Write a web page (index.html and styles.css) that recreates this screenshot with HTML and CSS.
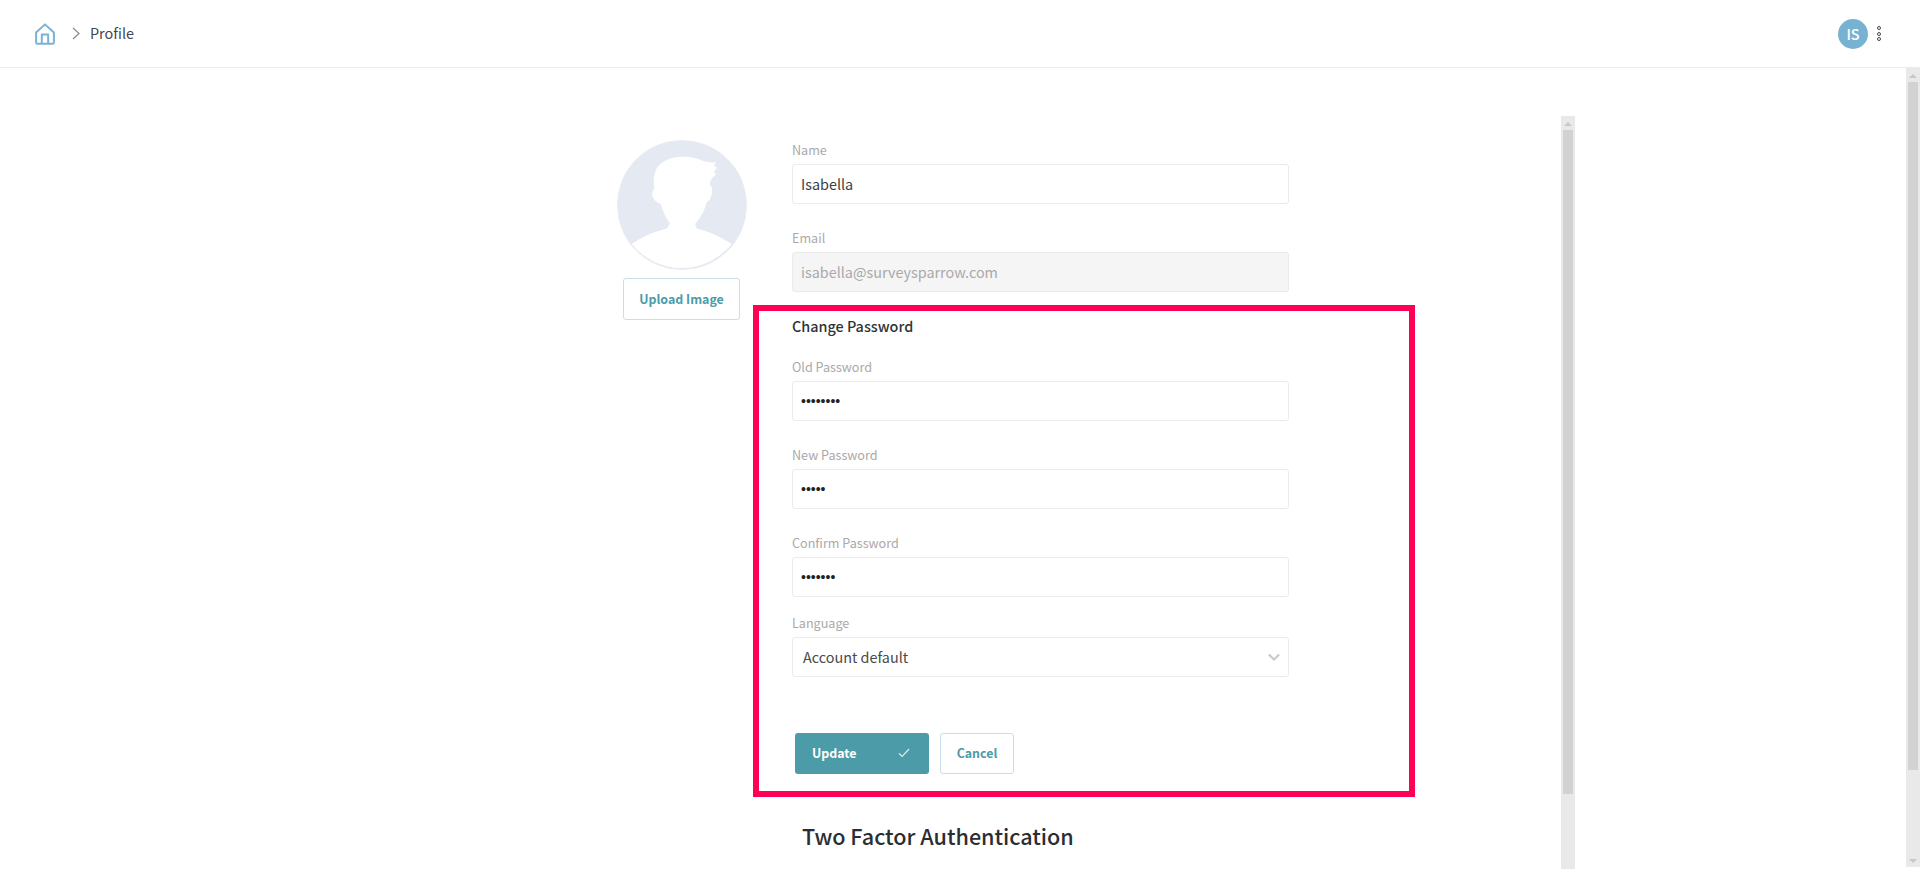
FILE: index.html
```html
<!DOCTYPE html>
<html lang="en">
<head>
    <meta charset="UTF-8">
    <title>Profile</title>
    <link rel="stylesheet" href="styles.css">
</head>
<body>
    <header class="topbar">
        <div class="crumbs">
            <svg class="home-icon" width="20" height="22" viewBox="0 0 22 24" fill="none" stroke="#7ab3d3" stroke-width="2.2" stroke-linejoin="round">
                <path d="M1.2 10.4 11 1.4l9.8 9v11a1.4 1.4 0 0 1-1.4 1.4H2.6a1.4 1.4 0 0 1-1.4-1.4z"/>
                <path d="M7.5 22.8V12.5h7v10.3"/>
            </svg>
            <svg class="crumb-arrow" width="8" height="13" viewBox="0 0 8 13" fill="none" stroke="#8a8a8a" stroke-width="1.2">
                <path d="M1 1l6 5.5L1 12"/>
            </svg>
            <span class="crumb-text">Profile</span>
        </div>
        <div class="user">
            <span class="avatar-small">IS</span>
            <span class="dots"><i></i><i></i><i></i></span>
        </div>
    </header>

    <div class="page">
        <main class="main">
            <div class="panel">
                <div class="profile">
                    <div class="photo-col">
                        <div class="photo">
                            <svg width="130" height="130" viewBox="0 0 130 130">
                                <circle cx="65" cy="65" r="64.5" fill="#e5e9f1" stroke="#e9ecf1"/>
                                <path fill="#fff" d="M14.7 104Q28 94 50 88.5L53 83.3Q46 74 44 64 37 62 35 55 35 51 37.5 48.3 35 38 39.7 28.3 44 20 59.7 17 73 15 86.3 21 92 23 99 22.3L97 25.7 100.3 27.7 97 31.7 99 34.3 95 38.3Q92.5 42 93 45 96 47 95 53 94 60 89.7 62 87 74 78 84L80 88.5Q100 94 114.7 104A64 64 0 0 1 14.7 104z"/>
                            </svg>
                        </div>
                        <button class="btn btn-outline upload-btn">Upload Image</button>
                    </div>

                    <div class="form-col">
                        <div class="field">
                            <label class="field-label">Name</label>
                            <div class="input">Isabella</div>
                        </div>
                        <div class="field">
                            <label class="field-label">Email</label>
                            <div class="input input-disabled">isabella@surveysparrow.com</div>
                        </div>

                        <section class="highlight">
                            <h4 class="section-title">Change Password</h4>
                            <div class="field">
                                <label class="field-label">Old Password</label>
                                <div class="input input-secret">••••••••</div>
                            </div>
                            <div class="field">
                                <label class="field-label">New Password</label>
                                <div class="input input-secret">•••••</div>
                            </div>
                            <div class="field field-confirm">
                                <label class="field-label">Confirm Password</label>
                                <div class="input input-secret">•••••••</div>
                            </div>
                            <div class="field field-last">
                                <label class="field-label">Language</label>
                                <div class="input input-select">
                                    <span>Account default</span>
                                    <svg width="12" height="8" viewBox="0 0 14 9" fill="none" stroke="#c9c9c9" stroke-width="2.4">
                                        <path d="M1 1.5l6 6 6-6"/>
                                    </svg>
                                </div>
                            </div>
                            <div class="actions">
                                <button class="btn btn-primary">
                                    <span>Update</span>
                                    <svg width="12" height="10" viewBox="0 0 12 10" fill="none" stroke="#d9ecee" stroke-width="1.2">
                                        <path d="M1 5.5l3.2 3L11 1"/>
                                    </svg>
                                </button>
                                <button class="btn btn-outline cancel-btn">Cancel</button>
                            </div>
                        </section>

                        <h2 class="two-factor">Two Factor Authentication</h2>
                    </div>
                </div>
            </div>
            <div class="scrollbar inner-scroll">
                <span class="scroll-arrow"></span>
                <span class="scroll-thumb"></span>
            </div>
        </main>
        <div class="scrollbar page-scroll">
            <span class="scroll-arrow"></span>
            <span class="scroll-thumb"></span>
            <span class="scroll-arrow scroll-arrow-down"></span>
        </div>
    </div>
</body>
</html>
```

FILE: styles.css
```css
* {
    box-sizing: border-box;
}

html, body {
    height: 100%;
    margin: 0;
    overflow: hidden;
}

body {
    font-family: "Noto Sans CJK SC", "Noto Sans", sans-serif;
    color: #3a3f44;
    background: #fff;
    display: flex;
    flex-direction: column;
}

.topbar {
    height: 68px;
    flex: none;
    display: flex;
    align-items: center;
    justify-content: space-between;
    padding: 0 39px 0 35px;
    border-bottom: 1px solid #ebebeb;
}

.crumbs {
    display: flex;
    align-items: center;
}

.crumb-arrow {
    margin-left: 17px;
    margin-right: 10px;
}

.crumb-text {
    font-size: 14.4px;
    line-height: 20px;
    color: #3f464c;
    margin-top: -1px;
}

.user {
    display: flex;
    align-items: center;
    gap: 9px;
}

.avatar-small {
    width: 30px;
    height: 30px;
    border-radius: 50%;
    background: #78b2d3;
    color: #fff;
    font-size: 14.4px;
    font-weight: 500;
    display: flex;
    align-items: center;
    justify-content: center;
}

.dots {
    display: flex;
    flex-direction: column;
    gap: 1.5px;
}

.dots i {
    width: 4px;
    height: 4px;
    border: 1px solid #4a4a4a;
    border-radius: 50%;
}

.page {
    flex: 1;
    min-height: 0;
    display: flex;
}

.main {
    flex: 1;
    min-width: 0;
    display: flex;
    padding-top: 48px;
    padding-left: 617px;
    padding-right: 331px;
    overflow: hidden;
}

.panel {
    flex: 1;
    min-width: 0;
}

.profile {
    display: flex;
    padding-top: 24px;
}

.photo-col {
    width: 130px;
    flex: none;
    display: flex;
    flex-direction: column;
    align-items: flex-start;
}

.photo {
    height: 130px;
}

.upload-btn {
    width: 117px;
    height: 42px;
    margin: 8px 0 0 6px;
    font-size: 12.4px;
}

.form-col {
    width: 497px;
    margin-left: 45px;
    flex: none;
}

.field {
    margin-bottom: 24px;
}

.field-confirm {
    margin-bottom: 16px;
}

.field-label {
    display: block;
    font-size: 12.6px;
    line-height: 20px;
    color: #a9a9a9;
    margin-bottom: 4px;
}

.input {
    height: 40px;
    border: 1px solid #ebebeb;
    border-radius: 3px;
    padding: 0 8px 1px;
    display: flex;
    align-items: center;
    font-size: 14.4px;
    color: #3a3f44;
    background: #fff;
}

.input-disabled {
    background: #f5f5f5;
    color: #a9a9a9;
}

.input-secret {
    font-family: "Liberation Sans", sans-serif;
    font-size: 14px;
    color: #222;
}

.input-select {
    padding: 0 8px 1px 10px;
    justify-content: space-between;
    color: #4a4a4a;
}

.highlight {
    width: 662px;
    height: 492px;
    margin-left: -39px;
    margin-top: -11px;
    border: 6px solid #ff0055;
    padding: 5px 120px 0 33px;
}

.section-title {
    margin: 0 0 21px;
    font-size: 14.4px;
    line-height: 20px;
    font-weight: 500;
    color: #2f3337;
}

.field-last {
    margin-bottom: 0;
}

.btn {
    font-family: inherit;
    font-size: 12.4px;
    font-weight: 700;
    border-radius: 3px;
    padding: 0 0 1px;
    line-height: 20px;
}

.btn-outline {
    background: #fff;
    border: 1px solid #c6e0e5;
    color: #4b9ba8;
}

.btn-primary {
    width: 134px;
    height: 41px;
    background: #4b9ba8;
    border: 0;
    color: #fff;
    display: flex;
    align-items: center;
    justify-content: space-between;
    padding: 0 19px 1px 17px;
}

.cancel-btn {
    width: 74px;
    height: 41px;
}

.actions {
    display: flex;
    gap: 11px;
    margin-top: 56px;
    padding-left: 3px;
}

.two-factor {
    margin: 23px 0 0 10px;
    font-size: 21.6px;
    line-height: 32px;
    font-weight: 500;
    color: #2a2e33;
}

.scrollbar {
    flex: none;
    width: 14px;
    background: #e9e9e9;
    display: flex;
    flex-direction: column;
    align-items: center;
}

.scroll-arrow {
    width: 0;
    height: 0;
    margin-top: 6px;
    border-left: 4px solid transparent;
    border-right: 4px solid transparent;
    border-bottom: 4px solid #c8c8c8;
}

.scroll-arrow-down {
    margin-top: auto;
    margin-bottom: 4px;
    border-bottom: 0;
    border-top: 4px solid #c8c8c8;
}

.scroll-thumb {
    width: 10px;
    margin-top: 4px;
    background: #d2d2d2;
}

.inner-scroll .scroll-thumb {
    height: 664px;
}

.page-scroll .scroll-thumb {
    height: 688px;
}

.page-scroll {
    margin-bottom: 2px;
}
```
